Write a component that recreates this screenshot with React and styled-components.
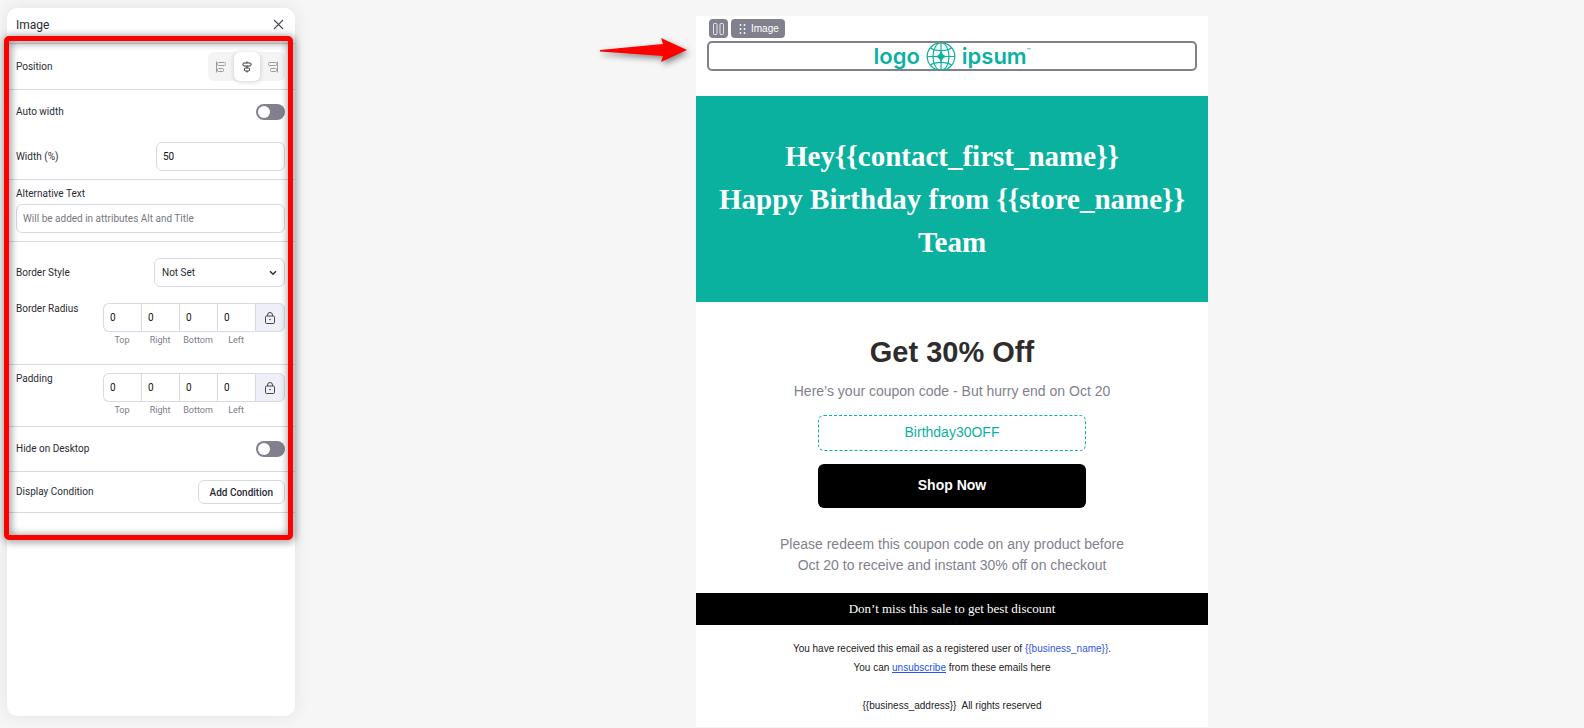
import React, { Fragment, useState } from "react";
import styled, { createGlobalStyle } from "styled-components";

const GlobalStyle = createGlobalStyle`
  * {
    box-sizing: border-box;
  }

  body {
    margin: 0;
    background: #f6f6f6;
    font-family: Roboto, "Liberation Sans", sans-serif;
    color: #2b2b33;
  }

  button, input, select {
    font: inherit;
    color: inherit;
  }

  h1, h2, p {
    margin: 0;
  }
`;

/* Layout */

const Editor = styled.div`
  display: flex;
  min-height: 100vh;
`;

const Sidebar = styled.aside`
  flex: 0 0 320px;
  display: flex;
  padding: 8px 25px 12px 7px;
`;

const Canvas = styled.main`
  flex: 1;
  display: flex;
  justify-content: center;
  align-items: flex-start;
  padding: 16px 0 0;
`;

/* Settings panel */

const Panel = styled.section`
  flex: 1;
  background: #fff;
  border-radius: 10px;
  box-shadow: 0 0 16px rgba(40, 60, 70, 0.1);
`;

const PanelHeader = styled.header`
  display: flex;
  justify-content: space-between;
  align-items: center;
  height: 36px;
  padding: 0 11px 2px 9px;
  border-bottom: 1px solid #d9d9e6;
`;

const PanelTitle = styled.h2`
  font-size: 12px;
  font-weight: 400;
  line-height: 16px;
`;

const CloseButton = styled.button`
  display: flex;
  padding: 0;
  border: 0;
  background: none;
  color: #4a4a55;
`;

const Settings = styled.div`
  position: relative;
`;

const Highlight = styled.div`
  position: absolute;
  inset: -8px 2px -27px -3px;
  border: 5px solid #fe0000;
  border-radius: 5px;
  filter: drop-shadow(1px 1px 4px rgba(0, 0, 0, 0.6));
  pointer-events: none;
`;

const Group = styled.div`
  display: flex;
  flex-direction: column;
  gap: ${({ $gap }) => $gap || 0}px;
  padding: ${({ $top }) => $top || 8}px 10px ${({ $bottom }) => $bottom || 8}px 9px;
  border-bottom: 1px solid #d9d9e6;
`;

const Field = styled.div`
  display: flex;
  justify-content: space-between;
  align-items: ${({ $top }) => ($top ? "flex-start" : "center")};
`;

const Label = styled.label`
  font-size: 10px;
  line-height: 12px;
`;

const TextInput = styled.input`
  width: ${({ $width }) => $width || "100%"};
  height: 29px;
  padding: 0 6px;
  border: 1px solid #d9d9e6;
  border-radius: 6px;
  background: #fff;
  font-size: 10px;
  color: #111;
  outline: none;

  &::placeholder {
    color: #777780;
    opacity: 1;
  }
`;

const SelectWrap = styled.div`
  display: grid;
  align-items: center;
  width: 131px;

  > * {
    grid-area: 1 / 1;
  }

  > svg {
    justify-self: end;
    margin-right: 8px;
    pointer-events: none;
  }
`;

const Select = styled.select`
  appearance: none;
  width: 100%;
  height: 29px;
  padding: 0 7px;
  border: 1px solid #d9d9e6;
  border-radius: 6px;
  background: #fff;
  font-size: 10px;
`;

const Segmented = styled.div`
  display: flex;
  height: 29px;
  border-radius: 6px;
  background: #f4f4f5;
`;

const Segment = styled.button`
  display: flex;
  align-items: center;
  justify-content: center;
  width: 26px;
  padding: 0;
  border: 0;
  border-radius: 6px;
  background: ${({ $active }) => ($active ? "#fff" : "none")};
  box-shadow: ${({ $active }) => ($active ? "0 1px 5px rgba(0, 0, 0, 0.18)" : "none")};
  color: ${({ $active }) => ($active ? "#33333b" : "#9a9aa2")};

  &:last-child {
    width: 25px;
  }
`;

const Switch = styled.input`
  appearance: none;
  display: flex;
  align-items: center;
  width: 29px;
  height: 16px;
  margin: 0;
  padding: 0 2px;
  border-radius: 8px;
  background: #81818d;

  &::before {
    content: "";
    width: 12px;
    height: 12px;
    border-radius: 50%;
    background: #fff;
  }

  &:checked {
    justify-content: flex-end;
  }
`;

const Sides = styled.div`
  display: grid;
  grid-template-columns: repeat(4, 38px) 30px;
  row-gap: 2px;
`;

const SideInput = styled.input`
  width: 100%;
  height: 29px;
  padding: 0 6px;
  border: 1px solid #d9d9e6;
  border-right: 0;
  border-radius: ${({ $first }) => ($first ? "6px 0 0 6px" : "0")};
  background: #fff;
  font-size: 10px;
  color: #111;
  outline: none;
`;

const SideLabel = styled.label`
  font-size: 9px;
  line-height: 12px;
  text-align: center;
  color: #7c7c87;
`;

const LockButton = styled.button`
  display: flex;
  align-items: center;
  justify-content: center;
  padding: 0;
  border: 1px solid #d9d9e6;
  border-radius: 0 6px 6px 0;
  background: #efeff8;
  color: #44444e;
`;

const ConditionButton = styled.button`
  height: 24px;
  padding: 0 11px;
  border: 1px solid #d9d9e6;
  border-radius: 6px;
  background: #fff;
  font-size: 10px;
  font-weight: 500;
`;

/* Email */

const Email = styled.article`
  position: relative;
  width: 512px;
  background: #fff;
  font-family: "Liberation Sans", Arial, sans-serif;
  text-align: center;
`;

const Pointer = styled.svg`
  position: absolute;
  top: 14px;
  left: -104px;
  filter: drop-shadow(2px 3px 3px rgba(0, 0, 0, 0.45));
`;

const ImageBlock = styled.div`
  display: flex;
  flex-direction: column;
  gap: 3px;
  padding: 3px 11px 25px;
`;

const BlockTools = styled.div`
  display: flex;
  gap: 3px;
  padding-left: 2px;
`;

const ToolChip = styled.button`
  display: flex;
  align-items: center;
  justify-content: center;
  gap: 5px;
  height: 19px;
  padding: 0 ${({ $wide }) => ($wide ? 6 : 4)}px 0 ${({ $wide }) => ($wide ? 8 : 4)}px;
  border: 0;
  border-radius: 4px;
  background: #81818d;
  color: #fff;
  font-size: 10px;
`;

const Selected = styled.div`
  display: flex;
  justify-content: center;
  height: 30px;
  border: 2px solid #81818d;
  border-radius: 5px;
`;

const Logo = styled.div`
  display: flex;
  align-items: center;
  gap: 6px;
  color: #0bb19f;
  font-family: Inter, "Liberation Sans", sans-serif;
  font-size: 22px;
  font-weight: 600;
  line-height: 26px;
`;

const Mark = styled.sup`
  font-size: 6px;
  line-height: 6px;
  vertical-align: 11px;
`;

const Hero = styled.section`
  padding: 39px 16px 38px;
  background: #0bb19f;
`;

const HeroTitle = styled.h1`
  font-family: "Liberation Serif", "Times New Roman", serif;
  font-size: 29px;
  line-height: 43px;
  color: #fff;
`;

const Offer = styled.section`
  display: flex;
  flex-direction: column;
  align-items: center;
  padding: 32px 12px 17px;
`;

const OfferTitle = styled.h2`
  margin-bottom: 11px;
  font-size: 29px;
  line-height: 36px;
  color: #2f2c2d;
`;

const OfferText = styled.p`
  max-width: 360px;
  font-size: 14px;
  line-height: 21px;
  color: #81818d;
`;

const Coupon = styled.div`
  width: 268px;
  height: 36px;
  margin: 13px 0;
  border: 1px dashed #0bb19f;
  border-radius: 6px;
  font-size: 14px;
  line-height: 33px;
  color: #0bb19f;
`;

const ShopButton = styled.button`
  width: 268px;
  height: 44px;
  margin-bottom: 26px;
  padding: 0 0 2px;
  border: 0;
  border-radius: 6px;
  background: #000;
  font-size: 14px;
  font-weight: 700;
  color: #fff;
`;

const Banner = styled.p`
  background: #000;
  font-family: "Liberation Serif", "Times New Roman", serif;
  font-size: 13px;
  line-height: 32px;
  color: #fff;
`;

const Footer = styled.footer`
  padding: 14px 12px 12px;
  font-size: 10px;
  line-height: 19px;
  color: #222;

  p + p:last-child {
    margin-top: 19px;
  }
`;

const Variable = styled.span`
  color: #3353e8;
`;

const FooterLink = styled.a`
  color: #2453e8;
`;

/* Icons */

const CloseIcon = () => (
  <svg width="11" height="11" viewBox="0 0 11 11" fill="none" stroke="currentColor" strokeWidth="1.1">
    <path d="M1 1l9 9M10 1l-9 9" />
  </svg>
);

const AlignIcon = ({ side }) => (
  <svg width="12" height="12" viewBox="0 0 12 12" fill="none" stroke="currentColor">
    {side === "left" && (
      <Fragment>
        <path d="M1.500 .5v11" />
        <rect x="2.500" y="1.500" width="8" height="3" rx="1" />
        <rect x="2.500" y="7.500" width="6" height="3" rx="1" />
      </Fragment>
    )}
    {side === "right" && (
      <Fragment>
        <path d="M10.500 .5v11" />
        <rect x="1.500" y="1.500" width="8" height="3" rx="1" />
        <rect x="3.500" y="7.500" width="6" height="3" rx="1" />
      </Fragment>
    )}
    {side === "center" && (
      <Fragment>
        <rect x="2" y="2" width="8" height="3" rx="1" />
        <rect x="3.500" y="7" width="5" height="3" rx="1" />
        <path d="M6 .5v1.500M6 5v2M6 10v1.500" />
      </Fragment>
    )}
  </svg>
);

const ChevronIcon = () => (
  <svg width="8" height="6" viewBox="0 0 8 6" fill="none" stroke="#33333b" strokeWidth="1.6">
    <path d="M1 1.200l3 3 3-3" />
  </svg>
);

const LockIcon = () => (
  <svg width="10" height="12" viewBox="0 0 10 12" fill="none" stroke="currentColor">
    <rect x=".5" y="4" width="9" height="7.500" rx="1.200" />
    <path d="M2.500 4V3a2.500 2.500 0 0 1 5 0v1" />
    <circle cx="5" cy="7.500" r=".8" fill="currentColor" stroke="none" />
  </svg>
);

const ColumnsIcon = () => (
  <svg width="11" height="12" viewBox="0 0 11 12" fill="none" stroke="currentColor" strokeWidth=".8">
    <rect x=".5" y=".5" width="3.500" height="11" rx="1" />
    <rect x="7" y=".5" width="3.500" height="11" rx="1" />
  </svg>
);

const GripIcon = () => (
  <svg width="7" height="10" viewBox="0 0 7 10" fill="currentColor">
    {[1, 5, 9].map((y) => (
      <Fragment key={y}>
        <circle cx="1.500" cy={y} r=".9" />
        <circle cx="5.500" cy={y} r=".9" />
      </Fragment>
    ))}
  </svg>
);

const GlobeIcon = () => (
  <svg width="30" height="27" viewBox="0 0 30 27" fill="none" stroke="currentColor" strokeWidth="1.2">
    <circle cx="15" cy="13.500" r="13.800" />
    <ellipse cx="15" cy="13.500" rx="8" ry="13.800" />
    <path d="M15 0v9M15 18v9M1 13.500h9M20 13.500h9" />
    <path d="M4.500 5c5 3.500 16 3.500 21 0M4.500 22c5-3.500 16-3.500 21 0" />
    <path
      d="M15 8.500c.6 3.200 1.800 4.400 5 5-3.200.6-4.400 1.800-5 5-.6-3.200-1.800-4.400-5-5 3.200-.6 4.400-1.800 5-5z"
      fill="currentColor"
    />
  </svg>
);

const ToggleField = ({ id, label }) => (
  <Field>
    <Label htmlFor={id}>{label}</Label>
    <Switch id={id} type="checkbox" role="switch" />
  </Field>
);

const SidesField = ({ name, label }) => {
  const sides = ["Top", "Right", "Bottom", "Left"];

  return (
    <Field $top>
      <Label as="span">{label}</Label>
      <Sides role="group" aria-label={label}>
        {sides.map((side, i) => (
          <SideInput key={side} id={`${name}-${side}`} $first={i === 0} defaultValue="0" />
        ))}
        <LockButton aria-label="Lock">
          <LockIcon />
        </LockButton>
        {sides.map((side) => (
          <SideLabel key={side} htmlFor={`${name}-${side}`}>
            {side}
          </SideLabel>
        ))}
      </Sides>
    </Field>
  );
};

const ImageSettings = () => {
  const [position, setPosition] = useState("center");

  return (
    <Panel>
      <PanelHeader>
        <PanelTitle>Image</PanelTitle>
        <CloseButton aria-label="Close">
          <CloseIcon />
        </CloseButton>
      </PanelHeader>
      <Settings>
        <Group>
          <Field>
            <Label as="span">Position</Label>
            <Segmented>
              {["left", "center", "right"].map((side) => (
                <Segment
                  key={side}
                  aria-label={side}
                  aria-pressed={position === side}
                  $active={position === side}
                  onClick={() => setPosition(side)}
                >
                  <AlignIcon side={side} />
                </Segment>
              ))}
            </Segmented>
          </Field>
        </Group>
        <Group $top={14} $gap={22}>
          <ToggleField id="auto-width" label="Auto width" />
          <Field>
            <Label htmlFor="width">Width (%)</Label>
            <TextInput id="width" $width="129px" defaultValue="50" />
          </Field>
        </Group>
        <Group $gap={4}>
          <Label htmlFor="alt">Alternative Text</Label>
          <TextInput id="alt" placeholder="Will be added in attributes Alt and Title" />
        </Group>
        <Group $top={16} $bottom={18} $gap={16}>
          <Field>
            <Label htmlFor="border-style">Border Style</Label>
            <SelectWrap>
              <Select id="border-style">
                <option>Not Set</option>
              </Select>
              <ChevronIcon />
            </SelectWrap>
          </Field>
          <SidesField name="radius" label="Border Radius" />
        </Group>
        <Group $bottom={10}>
          <SidesField name="padding" label="Padding" />
        </Group>
        <Group $top={14} $bottom={14}>
          <ToggleField id="hide-desktop" label="Hide on Desktop" />
        </Group>
        <Group>
          <Field>
            <Label as="span">Display Condition</Label>
            <ConditionButton>Add Condition</ConditionButton>
          </Field>
        </Group>
        <Highlight />
      </Settings>
    </Panel>
  );
};

const EmailPreview = () => (
  <Email>
    <Pointer width="100" height="40" viewBox="0 0 100 40" fill="#fe0000">
      <path d="M8 20L71 14L69 8L95 20L69 32L71 26L8 21.500Z" />
    </Pointer>
    <ImageBlock>
      <BlockTools>
        <ToolChip aria-label="Columns">
          <ColumnsIcon />
        </ToolChip>
        <ToolChip $wide>
          <GripIcon />
          Image
        </ToolChip>
      </BlockTools>
      <Selected>
        <Logo>
          <span>logo</span>
          <GlobeIcon />
          <span>
            ipsum<Mark>™</Mark>
          </span>
        </Logo>
      </Selected>
    </ImageBlock>
    <Hero>
      <HeroTitle>
        Hey{"{{contact_first_name}}"}
        <br />
        Happy Birthday from {"{{store_name}}"} Team
      </HeroTitle>
    </Hero>
    <Offer>
      <OfferTitle>Get 30% Off</OfferTitle>
      <OfferText>Here’s your coupon code - But hurry end on Oct 20</OfferText>
      <Coupon>Birthday30OFF</Coupon>
      <ShopButton>Shop Now</ShopButton>
      <OfferText>
        Please redeem this coupon code on any product before Oct 20 to receive and instant 30% off on checkout
      </OfferText>
    </Offer>
    <Banner>Don’t miss this sale to get best discount</Banner>
    <Footer>
      <p>
        You have received this email as a registered user of <Variable>{"{{business_name}}"}</Variable>.
      </p>
      <p>
        You can <FooterLink href="#unsubscribe">unsubscribe</FooterLink> from these emails here
      </p>
      <p>{"{{business_address}}"}&nbsp; All rights reserved</p>
    </Footer>
  </Email>
);

const App = () => {
  return (
    <Fragment>
      <GlobalStyle />
      <Editor>
        <Sidebar>
          <ImageSettings />
        </Sidebar>
        <Canvas>
          <EmailPreview />
        </Canvas>
      </Editor>
    </Fragment>
  );
};

export default App;
